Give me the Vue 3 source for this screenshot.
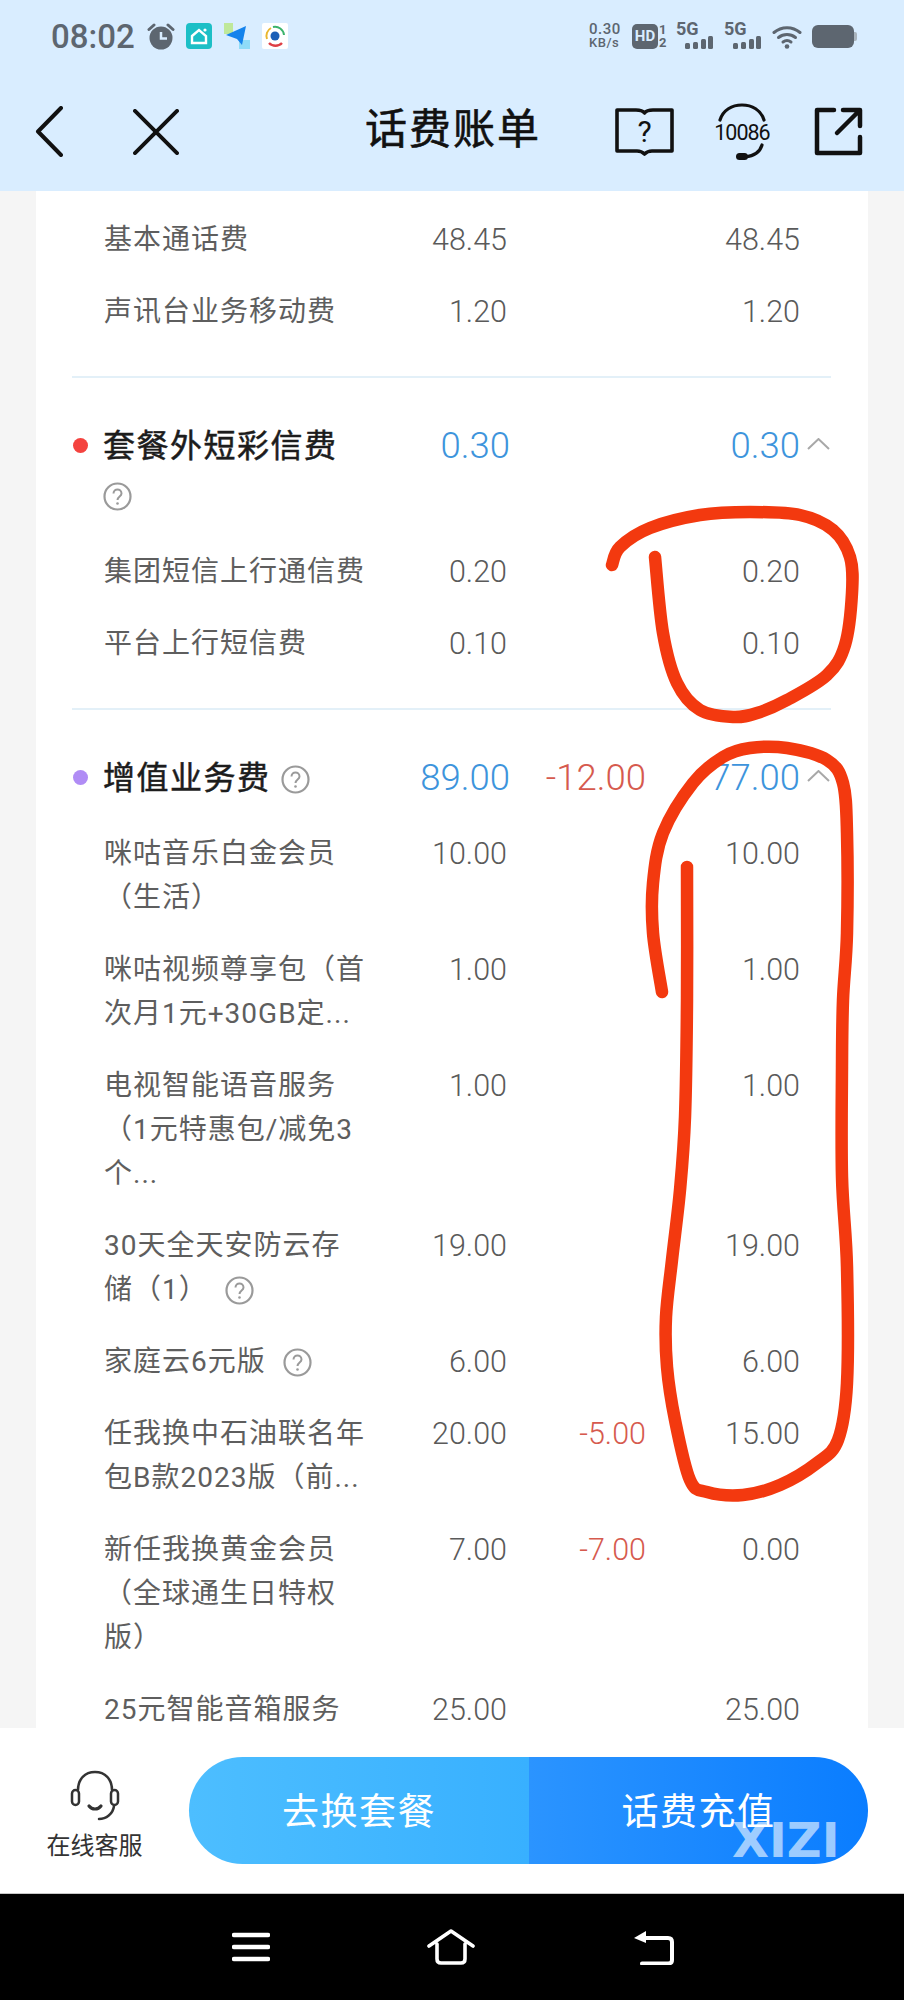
<script setup>
const topRows = [
  { name: '基本通话费', fee: '48.45', paid: '48.45' },
  { name: '声讯台业务移动费', fee: '1.20', paid: '1.20' }
]

const groups = [
  {
    name: '套餐外短彩信费',
    dot: '#f4433f',
    fee: '0.30',
    paid: '0.30',
    iconBelow: true,
    rows: [
      { name: '集团短信上行通信费', fee: '0.20', paid: '0.20' },
      { name: '平台上行短信费', fee: '0.10', paid: '0.10' }
    ]
  },
  {
    name: '增值业务费',
    dot: '#b08cf5',
    fee: '89.00',
    off: '-12.00',
    paid: '77.00',
    rows: [
      { name: '咪咕音乐白金会员\n（生活）', fee: '10.00', paid: '10.00' },
      { name: '咪咕视频尊享包（首\n次月1元+30GB定...', fee: '1.00', paid: '1.00' },
      { name: '电视智能语音服务\n（1元特惠包/减免3\n个...', fee: '1.00', paid: '1.00' },
      { name: '30天全天安防云存\n储（1）', fee: '19.00', paid: '19.00', help: true },
      { name: '家庭云6元版', fee: '6.00', paid: '6.00', help: true },
      { name: '任我换中石油联名年\n包B款2023版（前...', fee: '20.00', off: '-5.00', paid: '15.00' },
      { name: '新任我换黄金会员\n（全球通生日特权\n版）', fee: '7.00', off: '-7.00', paid: '0.00' },
      { name: '25元智能音箱服务', fee: '25.00', paid: '25.00' }
    ]
  }
]

// hand drawn marks on top of the screenshot
const smooth = (pts) => {
  let d = `M${pts[0][0]} ${pts[0][1]}`
  for (let i = 0; i < pts.length - 1; i++) {
    const p0 = pts[i - 1] || pts[i]
    const p1 = pts[i]
    const p2 = pts[i + 1]
    const p3 = pts[i + 2] || p2
    const c1x = p1[0] + (p2[0] - p0[0]) / 6
    const c1y = p1[1] + (p2[1] - p0[1]) / 6
    const c2x = p2[0] - (p3[0] - p1[0]) / 6
    const c2y = p2[1] - (p3[1] - p1[1]) / 6
    d += ` C${c1x} ${c1y} ${c2x} ${c2y} ${p2[0]} ${p2[1]}`
  }
  return d
}

const marks = [
  smooth([[612, 565], [620, 547], [650, 528], [700, 515], [750, 512], [800, 515], [833, 530], [850, 557], [852, 593], [845, 645], [827, 675], [787, 700], [757, 713], [733, 717], [700, 710], [677, 683], [663, 633], [655, 557]]),
  smooth([[662, 992], [653, 933], [653, 883], [663, 833], [693, 783], [723, 757], [750, 748], [787, 748], [827, 760], [843, 783], [847, 833], [847, 933], [843, 1000], [842, 1067], [842, 1177], [847, 1267], [847, 1383], [838, 1440], [817, 1463], [780, 1485], [743, 1495], [707, 1492], [690, 1480], [675, 1420], [667, 1367], [666, 1317], [672, 1260], [680, 1190], [685, 1117], [687, 1000], [687, 867]])
]
</script>

<template>
  <div class="page">
    <header class="top">
      <div class="status">
        <span class="time">08:02</span>
        <svg class="st-clock" width="28" height="27" viewBox="0 0 28 27">
          <circle cx="14" cy="15" r="11.5" fill="#5d6670" />
          <path d="M14 9v6.5h6" fill="none" stroke="#d9edff" stroke-width="2.5" />
          <path d="M2 6.5 7 2M26 6.5 21 2" stroke="#5d6670" stroke-width="3" stroke-linecap="round" />
        </svg>
        <svg class="st-app" width="26" height="26" viewBox="0 0 26 26">
          <rect width="26" height="26" rx="4" fill="#1cbfc6" />
          <path d="M6 13 13 7l7 6v7H6z" fill="none" stroke="#fff" stroke-width="2.4" />
          <circle cx="19" cy="7" r="1.6" fill="#fff" />
        </svg>
        <svg class="st-app" width="26" height="26" viewBox="0 0 26 26">
          <rect width="9" height="11" fill="#bfe89a" />
          <rect x="15" y="17" width="11" height="9" fill="#8fdcf8" />
          <path d="M2 12 22 3l-4 19-5-6z" fill="#1583ec" />
        </svg>
        <svg class="st-app" width="26" height="26" viewBox="0 0 26 26">
          <rect width="26" height="26" rx="2" fill="#fff" />
          <path d="M5 16A9 9 0 0 1 9 5" fill="none" stroke="#e9b72f" stroke-width="2" />
          <path d="M11 4a9 9 0 0 1 11 8" fill="none" stroke="#3bb36b" stroke-width="2" />
          <path d="M7 20a9 9 0 0 0 13 0" fill="none" stroke="#de3f45" stroke-width="2.4" />
          <circle cx="13" cy="13" r="4.5" fill="#1b5fb8" />
        </svg>
        <div class="status-right">
          <div class="speed"><span>0.30</span><small>KB/s</small></div>
          <div class="hd"><b>HD</b><div class="sim"><span>1</span><span>2</span></div></div>
          <div v-for="n in 2" :key="n" class="net">
            <span>5G</span>
            <svg width="28" height="13" viewBox="0 0 28 13">
              <rect x="0" y="7" width="5" height="6" rx="1.5" fill="#5d6670" />
              <rect x="8" y="6" width="5" height="7" rx="1.5" fill="#5d6670" />
              <rect x="16" y="3" width="5" height="10" rx="1.5" fill="#5d6670" />
              <rect x="23" y="0" width="5" height="13" rx="1.5" fill="#5d6670" />
            </svg>
          </div>
          <svg class="wifi" width="30" height="25" viewBox="0 0 30 25">
            <g fill="none" stroke="#5d6670" stroke-width="3" stroke-linecap="round">
              <path d="M2 8.500C9.500 2 20.500 2 28 8.500" />
              <path d="M6.500 13.500C11.500 9.500 18.500 9.500 23.500 13.500" />
              <path d="M11 18c2.500-1.800 5.500-1.800 8 0" />
            </g>
            <circle cx="15" cy="22.500" r="2.300" fill="#5d6670" />
          </svg>
          <div class="battery" />
        </div>
      </div>

      <nav class="nav">
        <div class="nav-left">
          <svg width="28" height="51" viewBox="0 0 28 51">
            <path d="M26 2 3 25.500 26 49" fill="none" stroke="#111" stroke-width="4" stroke-linecap="round" stroke-linejoin="round" />
          </svg>
          <svg width="46" height="46" viewBox="0 0 47 47">
            <path d="M2 2 45 45M45 2 2 45" fill="none" stroke="#111" stroke-width="4" stroke-linecap="round" />
          </svg>
        </div>
        <h1>话费账单</h1>
        <div class="nav-right">
          <svg width="59" height="50" viewBox="0 0 59 50">
            <path d="M2 3h19c4 0 7 1 8.500 3C31 4 34 3 38 3h19v41H37c-3 0-5.500 1-7.500 3-2-2-4.500-3-7.500-3H2z" fill="none" stroke="#111" stroke-width="3.600" stroke-linejoin="round" />
            <text x="29.500" y="35" text-anchor="middle" class="book-q">?</text>
          </svg>
          <svg class="kefu" width="56" height="58" viewBox="0 0 56 58">
            <path d="M6 17C9 7 18 2 28 2s19 5 22 15" fill="none" stroke="#111" stroke-width="3.200" stroke-linecap="round" />
            <path d="M48 42c-2 7-8 11-17 12" fill="none" stroke="#111" stroke-width="3.200" stroke-linecap="round" />
            <rect x="22" y="50" width="12" height="7" rx="3.500" fill="#111" />
            <text x="28" y="37" text-anchor="middle" class="kefu-num">10086</text>
          </svg>
          <svg width="49" height="49" viewBox="0 0 49 49">
            <path d="M20 3H3v43h43V30" fill="none" stroke="#111" stroke-width="4.500" stroke-linecap="round" stroke-linejoin="round" />
            <path d="M23 26 45 4M29 3h17v16" fill="none" stroke="#111" stroke-width="4.500" stroke-linecap="round" stroke-linejoin="round" />
          </svg>
        </div>
      </nav>
    </header>

    <main class="scroll">
      <div class="card">
        <section class="section first">
          <div v-for="row in topRows" :key="row.name" class="row">
            <div class="name">{{ row.name }}</div>
            <div class="num">{{ row.fee }}</div>
            <div class="num"></div>
            <div class="num">{{ row.paid }}</div>
          </div>
        </section>

        <section v-for="group in groups" :key="group.name" class="section">
          <div class="group-head">
            <i class="dot" :style="{ background: group.dot }" />
            <div class="group-name">
              {{ group.name }}<svg class="help" :class="{ below: group.iconBelow }" width="29" height="29" viewBox="0 0 29 29">
                <circle cx="14.500" cy="14.500" r="13" fill="none" stroke="#9a9a9a" stroke-width="2.200" />
                <path d="M10.500 11.500c0-5.500 8-5.500 8 0 0 3-4 3-4 6.500" fill="none" stroke="#9a9a9a" stroke-width="2" />
                <circle cx="14.500" cy="21.500" r="1.300" fill="#9a9a9a" />
              </svg>
            </div>
            <div class="num fee">{{ group.fee }}</div>
            <div class="num off">{{ group.off }}</div>
            <div class="num fee">{{ group.paid }}</div>
            <svg class="arrow" width="23" height="12" viewBox="0 0 23 12">
              <path d="M1 11 11.500 1 22 11" fill="none" stroke="#a8a8a8" stroke-width="2" />
            </svg>
          </div>
          <div v-for="row in group.rows" :key="row.name" class="row">
            <div class="name">
              {{ row.name }}<svg v-if="row.help" class="help small" width="29" height="29" viewBox="0 0 29 29">
                <circle cx="14.500" cy="14.500" r="13" fill="none" stroke="#9a9a9a" stroke-width="2.200" />
                <path d="M10.500 11.500c0-5.500 8-5.500 8 0 0 3-4 3-4 6.500" fill="none" stroke="#9a9a9a" stroke-width="2" />
                <circle cx="14.500" cy="21.500" r="1.300" fill="#9a9a9a" />
              </svg>
            </div>
            <div class="num">{{ row.fee }}</div>
            <div class="num off">{{ row.off }}</div>
            <div class="num">{{ row.paid }}</div>
          </div>
        </section>
      </div>
    </main>

    <footer class="bottom">
      <div class="service">
        <svg width="50" height="51" viewBox="0 0 50 51">
          <g fill="none" stroke="#333" stroke-width="2.500" stroke-linecap="round">
            <path d="M8 20C8 9 15 2 25 2s17 7 17 18" />
            <rect x="2" y="20" width="7" height="15" rx="3.500" />
            <rect x="41" y="20" width="7" height="15" rx="3.500" />
            <path d="M44 36c-1 8-8 13-15 13" />
            <path d="M19 36c3 4 9 4 12 0" stroke-width="3.200" />
          </g>
        </svg>
        <span>在线客服</span>
      </div>
      <div class="pill">
        <button class="btn change">去换套餐</button>
        <button class="btn recharge">话费充值</button>
        <span class="mark">XIZI</span>
      </div>
    </footer>

    <div class="navbar">
      <svg width="38" height="30" viewBox="0 0 38 30">
        <path d="M2 3h34M2 15h34M2 27h34" stroke="#fff" stroke-width="4.500" stroke-linecap="round" />
      </svg>
      <svg width="48" height="36" viewBox="0 0 48 36">
        <path d="M2 17 24 2l22 15M10 15v15c0 2.500 1.500 4 4 4h20c2.500 0 4-1.500 4-4V15" fill="none" stroke="#fff" stroke-width="3.600" stroke-linecap="round" stroke-linejoin="round" />
      </svg>
      <svg width="42" height="36" viewBox="0 0 42 36">
        <path d="M10 9h26c2.500 0 4 1.500 4 4v18c0 2.500-1.500 3.500-4 3.500H10" fill="none" stroke="#fff" stroke-width="4" stroke-linecap="round" />
        <path d="M14 2 2 9l12 5z" fill="#fff" />
      </svg>
    </div>

    <svg class="scribble" width="904" height="2000" viewBox="0 0 904 2000">
      <path v-for="(d, i) in marks" :key="i" :d="d" fill="none" stroke="#f3390f" stroke-width="12.500" stroke-linecap="round" stroke-linejoin="round" />
    </svg>
  </div>
</template>

<style scoped>
.page {
  position: relative;
  display: flex;
  flex-direction: column;
  width: 904px;
  height: 2000px;
  overflow: hidden;
  background: #f5f5f5;
  font-family: Roboto, "Noto Sans CJK SC", sans-serif;
}

.top {
  background: #d9edff;
  height: 191px;
  flex: none;
}

.status {
  display: flex;
  align-items: center;
  height: 72px;
  padding: 0 50px 0 51px;
  color: #5d6670;
}

.time {
  font-size: 33px;
  font-weight: 500;
  width: 96px;
  line-height: 1;
}

.st-clock {
  margin-right: 11px;
}

.st-app {
  margin-right: 12px;
}

.status-right {
  display: flex;
  align-items: center;
  margin-left: auto;
}

.speed {
  display: flex;
  flex-direction: column;
  width: 43px;
  font-size: 15px;
  font-weight: 500;
  line-height: 13px;
  letter-spacing: 0.5px;
}

.speed small {
  font-size: 13px;
}

.hd {
  display: flex;
  align-items: center;
  width: 44px;
}

.hd b {
  width: 26px;
  height: 25px;
  border-radius: 5px;
  background: #5d6670;
  color: #d9edff;
  font-size: 15px;
  line-height: 25px;
  text-align: center;
}

.sim {
  display: flex;
  flex-direction: column;
  margin-left: 1px;
  font-size: 13px;
  font-weight: 700;
  line-height: 13px;
}

.net {
  position: relative;
  width: 48px;
  height: 26px;
  font-size: 18px;
  font-weight: 700;
  line-height: 12px;
}

.net svg {
  position: absolute;
  left: 9px;
  top: 13px;
}

.wifi {
  margin-right: 10px;
}

.battery {
  position: relative;
  width: 42px;
  height: 23px;
  border-radius: 6px;
  background: #5d6670;
}

.battery::after {
  content: "";
  position: absolute;
  left: 42px;
  top: 7px;
  width: 3px;
  height: 9px;
  border-radius: 0 2px 2px 0;
  background: #aab4bd;
}

.nav {
  display: grid;
  grid-template-columns: 1fr auto 1fr;
  align-items: center;
  height: 119px;
  padding: 0 41px 0 35px;
}

.nav-left {
  display: flex;
  align-items: center;
  gap: 70px;
}

.nav-left svg,
.nav-right svg {
  display: block;
}

h1 {
  margin: 0 0 4px 8px;
  font-size: 42px;
  font-weight: 400;
  -webkit-text-stroke: 0.6px #111;
  letter-spacing: 2px;
  line-height: 60px;
  color: #111;
}

.nav-right {
  display: flex;
  align-items: center;
  justify-content: flex-end;
}

.kefu {
  margin: 0 44px 0 40px;
}

.book-q {
  font-size: 30px;
  fill: #111;
}

.kefu-num {
  font-size: 21.500px;
  letter-spacing: -1px;
  fill: #111;
}

.scroll {
  flex: 1;
  min-height: 0;
  overflow: hidden;
}

.card {
  width: 832px;
  margin-left: 36px;
  background: #fff;
}

.section {
  margin: 0 37px 0 36px;
  padding: 43px 0 28px;
  border-bottom: 2px solid #e3f0f8;
}

.section.first {
  padding-top: 13px;
}

.row,
.group-head {
  display: grid;
  grid-template-columns: 264px 139px 139px 154px 30px;
  padding-left: 32px;
}

.row {
  padding-top: 14px;
  padding-bottom: 14px;
}

.name {
  font-size: 28px;
  letter-spacing: 1px;
  line-height: 44px;
  color: #5e5e5e;
  white-space: pre-line;
}

.num {
  font-size: 30.500px;
  font-weight: 300;
  line-height: 44px;
  text-align: right;
  color: #5a5a5a;
}

.group-head {
  position: relative;
  grid-template-columns: 264px 142px 136px 154px 30px;
  margin-bottom: 15px;
}

.dot {
  position: absolute;
  left: 1px;
  top: 17px;
  width: 15px;
  height: 15px;
  border-radius: 50%;
}

.group-name {
  margin-left: -1px;
  font-size: 32px;
  font-weight: 400;
  -webkit-text-stroke: 0.5px #1c1c1c;
  letter-spacing: 1.500px;
  line-height: 50px;
  color: #1c1c1c;
}

.group-head .num {
  font-size: 36.500px;
  line-height: 50px;
}

.fee {
  color: #3d94dc;
}

.off {
  color: #d65a4e;
}

.arrow {
  align-self: start;
  margin: 17px 0 0 7px;
}

.help {
  margin-left: 10px;
  vertical-align: -5px;
}

.help.small {
  margin-left: 17px;
  vertical-align: -6px;
}

.help.below {
  display: block;
  margin: 11px 0 10px;
}

.bottom {
  display: flex;
  align-items: center;
  flex: none;
  height: 166px;
  background: #fff;
  border-bottom: 1px solid #c8c8c8;
  box-sizing: border-box;
}

.service {
  display: flex;
  flex-direction: column;
  align-items: center;
  gap: 8px;
  width: 189px;
  font-size: 24px;
  color: #333;
  line-height: 34px;
  margin-top: 12px;
}

.pill {
  position: relative;
  display: flex;
  width: 679px;
  height: 107px;
  margin-top: -1px;
}

.btn {
  flex: none;
  height: 100%;
  border: 0;
  padding: 0 0 3px;
  color: #fff;
  font-family: inherit;
  font-size: 37px;
  letter-spacing: 1.500px;
}

.change {
  width: 340px;
  border-radius: 54px 0 0 54px;
  background: linear-gradient(90deg, #4dbeff, #38b0ff);
}

.recharge {
  width: 339px;
  border-radius: 0 54px 54px 0;
  background: linear-gradient(90deg, #2b94ff, #0a7dff);
}

.mark {
  position: absolute;
  left: 543px;
  top: 60px;
  color: rgba(255, 255, 255, 0.6);
  font-family: "DejaVu Sans", sans-serif;
  font-size: 48px;
  font-weight: 700;
  line-height: 46px;
}

.navbar {
  display: flex;
  align-items: center;
  flex: none;
  height: 106px;
  padding: 0 230px 0 232px;
  justify-content: space-between;
  background: #000;
}

.scribble {
  position: absolute;
  top: 0;
  left: 0;
  pointer-events: none;
}
</style>
